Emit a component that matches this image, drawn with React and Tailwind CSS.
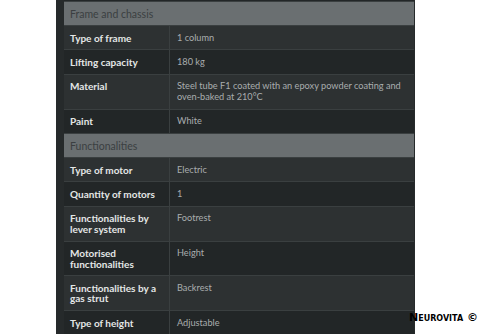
import React from "react";

const sections = [
  {
    title: "Frame and chassis",
    rows: [
      ["Type of frame", "1 column"],
      ["Lifting capacity", "180 kg"],
      ["Material", "Steel tube F1 coated with an epoxy powder coating and oven-baked at 210°C"],
      ["Paint", "White"],
    ],
  },
  {
    title: "Functionalities",
    rows: [
      ["Type of motor", "Electric"],
      ["Quantity of motors", "1"],
      ["Functionalities by lever system", "Footrest"],
      ["Motorised functionalities", "Height"],
      ["Functionalities by a gas strut", "Backrest"],
      ["Type of height", "Adjustable"],
    ],
  },
];

const SpecRow = ({ label, value, dark }) => (
  <div className={`flex border-b border-[#3a3f40] ${dark ? "bg-[#222627]" : "bg-[#2d3132]"}`}>
    <div className="w-[106px] shrink-0 border-r border-[#3a3f40] py-[6.5px] pl-[6px] pr-[4px] text-[10px] font-bold leading-[10.4px] text-[#e4e6e6]">
      {label}
    </div>
    <div className="flex-1 py-[6.5px] pl-[7px] pr-[4px] text-[9.2px] leading-[10.4px] text-[#a9adae]">{value}</div>
  </div>
);

export default function App() {
  return (
    <div className="relative h-[334px] w-[480px] overflow-hidden bg-white" style={{ fontFamily: "Lato, 'Open Sans', sans-serif" }}>
      <div className="ml-[56px] w-[359px] bg-[#262a2b] pl-[8px] pr-[1px]">
        <div className="h-[2px] border-b border-[#3a3f40] bg-[#222627]" />
        {sections.map((section) => (
          <div key={section.title}>
            <div className="border-b border-[#3a3f40] bg-[#6a6f71] py-[6.5px] pl-[6px] text-[10.5px] leading-[10px] text-[#3b3f41]">
              {section.title}
            </div>
            {section.rows.map(([label, value], i) => (
              <SpecRow key={label} label={label} value={value} dark={i % 2 === 1} />
            ))}
          </div>
        ))}
      </div>
      <div
        className="absolute left-[409px] top-[311px] text-[11px] font-bold leading-[14px] text-black"
        style={{ fontFamily: "'DejaVu Sans', sans-serif", fontVariant: "small-caps" }}
      >
        Neurovita ©
      </div>
    </div>
  );
}
